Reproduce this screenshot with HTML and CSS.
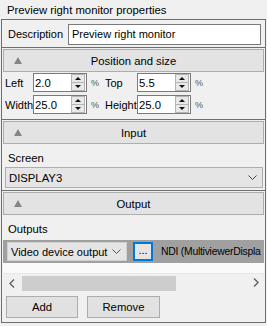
FILE: index.html
```html
<!DOCTYPE html>
<html>
<head>
<meta charset="utf-8">
<link rel="stylesheet" href="styles.css">
</head>
<body>
<div class="title"><span class="ttxt">Preview right monitor properties</span></div>
<div class="frame">
  <div class="sec desc">
    <span class="dlbl">Description</span>
    <div class="tb wide">Preview right monitor</div>
  </div>

  <div class="sec pos">
    <div class="hdr"><span class="tri"></span><span class="htxt">Position and size</span></div>
    <div class="row">
      <span class="l1">Left</span>
      <div class="num"><span class="v">2.0</span><span class="spin"><span class="sb"><i class="up"></i></span><span class="sb"><i class="dn"></i></span></span></div>
      <span class="pct">%</span>
      <span class="l2">Top</span>
      <div class="num"><span class="v">5.5</span><span class="spin"><span class="sb"><i class="up"></i></span><span class="sb"><i class="dn"></i></span></span></div>
      <span class="pct">%</span>
    </div>
    <div class="row">
      <span class="l1">Width</span>
      <div class="num"><span class="v">25.0</span><span class="spin"><span class="sb"><i class="up"></i></span><span class="sb"><i class="dn"></i></span></span></div>
      <span class="pct">%</span>
      <span class="l2">Height</span>
      <div class="num"><span class="v">25.0</span><span class="spin"><span class="sb"><i class="up"></i></span><span class="sb"><i class="dn"></i></span></span></div>
      <span class="pct">%</span>
    </div>
  </div>

  <div class="sec input">
    <div class="hdr"><span class="tri"></span><span class="htxt">Input</span></div>
    <div class="lbl">Screen</div>
    <div class="combo">
      <span>DISPLAY3</span>
      <svg class="chev" width="9" height="6" viewBox="0 0 9 6"><path d="M0.5 0.5 L4.5 4.5 L8.5 0.5" fill="none" stroke="#444" stroke-width="1"/></svg>
    </div>
  </div>

  <div class="sec output">
    <div class="hdr"><span class="tri"></span><span class="htxt">Output</span></div>
    <div class="lbl">Outputs</div>
    <div class="grid">
      <div class="band">
        <div class="gcombo">
          <span>Video device output</span>
          <svg class="chev2" width="9" height="6" viewBox="0 0 9 6"><path d="M0.5 0.5 L4.5 4.5 L8.5 0.5" fill="none" stroke="#555" stroke-width="1"/></svg>
        </div>
        <div class="dots">...</div>
        <span class="ndi">NDI (MultiviewerDispla</span>
      </div>
      <div class="blank"></div>
      <div class="hscroll">
        <svg class="arr" width="6" height="9" viewBox="0 0 6 9"><path d="M5 0.5 L1 4.5 L5 8.5" fill="none" stroke="#606060" stroke-width="1.4"/></svg>
        <div class="thumb"></div>
        <svg class="arr right" width="6" height="9" viewBox="0 0 6 9"><path d="M1 0.5 L5 4.5 L1 8.5" fill="none" stroke="#606060" stroke-width="1.4"/></svg>
      </div>
    </div>
    <div class="btns">
      <div class="btn add">Add</div>
      <div class="btn rem">Remove</div>
    </div>
  </div>
</div>
</body>
</html>
```

FILE: styles.css
```css
* { box-sizing: border-box; }
html, body { margin: 0; padding: 0; }
body {
  background: #f0f0f0;
  font-family: "Liberation Sans", Arial, sans-serif;
  font-size: 11px;
  color: #000;
  width: 267px;
  height: 326px;
  overflow: hidden;
}
.title {
  height: 19px;
  padding-left: 7px;
  padding-top: 3px;
  line-height: 14px;
  font-size: 11.3px;
}
.frame {
  margin-left: 1px;
  width: 265px;
  height: 304px;
  border: 1px solid #6e6e6e;
  display: flex;
  flex-direction: column;
}
.sec { border-top: 1px solid #6e6e6e; }
.sec.desc {
  border-top: none;
  height: 27px;
  display: flex;
  align-items: center;
  padding-top: 1px;
  padding-left: 6px;
}
.dlbl { width: 60px; }
.tb {
  background: #fff;
  border: 1px solid #7a7a7a;
  height: 21px;
  line-height: 19px;
  padding-left: 3px;
}
.tb.wide { width: 193px; }

.hdr {
  margin: 1px 1px 0 1px;
  height: 23px;
  background: #e3e3e3;
  border: 1px solid #adadad;
  position: relative;
  display: flex;
  align-items: center;
  justify-content: center;
}
.tri {
  position: absolute;
  left: 10px;
  top: 7px;
  width: 0; height: 0;
  border-left: 4px solid transparent;
  border-right: 4px solid transparent;
  border-bottom: 7px solid #858585;
}
.htxt { font-size: 11.3px; }

.sec.pos { height: 72px; }
.row {
  display: flex;
  align-items: center;
  height: 19px;
  margin-top: 1px;
  padding-left: 3px;
}
.row + .row { margin-top: 3px; }
.l1 { width: 28px; }
.l2 { width: 32px; }
.num {
  width: 54px;
  height: 19px;
  background: #fff;
  border: 1px solid #7a7a7a;
  display: flex;
  align-items: center;
  position: relative;
  padding-left: 1px;
}
.num .v { font-size: 11.3px; }
.spin {
  position: absolute;
  right: 1px;
  top: 0;
  width: 14px;
  height: 17px;
  display: flex;
  flex-direction: column;
}
.sb {
  flex: 1;
  background: #e8e8e8;
  border: 1px solid #b4b4b4;
  display: flex;
  align-items: center;
  justify-content: center;
}
.sb + .sb { border-top: none; }
.up { width: 0; height: 0; border-left: 3px solid transparent; border-right: 3px solid transparent; border-bottom: 3px solid #111; }
.dn { width: 0; height: 0; border-left: 3px solid transparent; border-right: 3px solid transparent; border-top: 3px solid #111; }
.pct {
  width: 18px;
  padding-left: 4px;
  font-size: 9px;
  color: #555;
}

.sec.input { height: 71px; }
.lbl {
  padding-left: 6px;
  height: 14px;
  line-height: 14px;
  font-size: 11.3px;
}
.input .lbl { margin-top: 7px; }
.combo {
  margin: 2px 0 0 3px;
  width: 258px;
  height: 21px;
  background: #e5e5e5;
  border: 1px solid #adadad;
  display: flex;
  align-items: center;
  justify-content: space-between;
  padding: 0 5px 0 3px;
  font-size: 11.3px;
}

.sec.output { flex: 1; }
.output .lbl { margin-top: 7px; }
.grid {
  margin: 4px 1px 0 1px;
  height: 53px;
  display: flex;
  flex-direction: column;
  overflow: hidden;
}
.band {
  height: 23px;
  background: #a0a0a0;
  display: flex;
  align-items: center;
  padding-left: 4px;
  white-space: nowrap;
  overflow: hidden;
}
.gcombo {
  width: 120px;
  height: 19px;
  background: #e5e5e5;
  border: 1px solid #d0d0d0;
  display: flex;
  align-items: center;
  justify-content: space-between;
  padding: 0 5px 0 3px;
  flex: none;
}
.dots {
  margin-left: 6px;
  width: 20px;
  height: 19px;
  background: #e5e5e5;
  border: 2px solid #0078d7;
  text-align: center;
  line-height: 13px;
  flex: none;
}
.ndi {
  margin-left: 8px;
  color: #000;
  font-size: 10.4px;
  letter-spacing: -0.25px;
}
.blank {
  height: 11px;
  background: #fafafa;
  border-bottom: 1px solid #e6e6e6;
}
.hscroll {
  height: 18px;
  background: #f0f0f0;
  display: flex;
  align-items: center;
  padding-left: 6px;
  position: relative;
}
.thumb {
  margin-left: 7px;
  width: 154px;
  height: 15px;
  background: #cdcdcd;
}
.arr.right { position: absolute; right: 5px; top: 4px; }
.btns {
  display: flex;
  margin-top: 3px;
  padding-left: 4px;
  gap: 9px;
}
.btn {
  height: 22px;
  width: 73px;
  background: #e1e1e1;
  border: 1px solid #adadad;
  display: flex;
  align-items: center;
  justify-content: center;
  font-size: 11.3px;
}
.btn.add { width: 72px; }
```
